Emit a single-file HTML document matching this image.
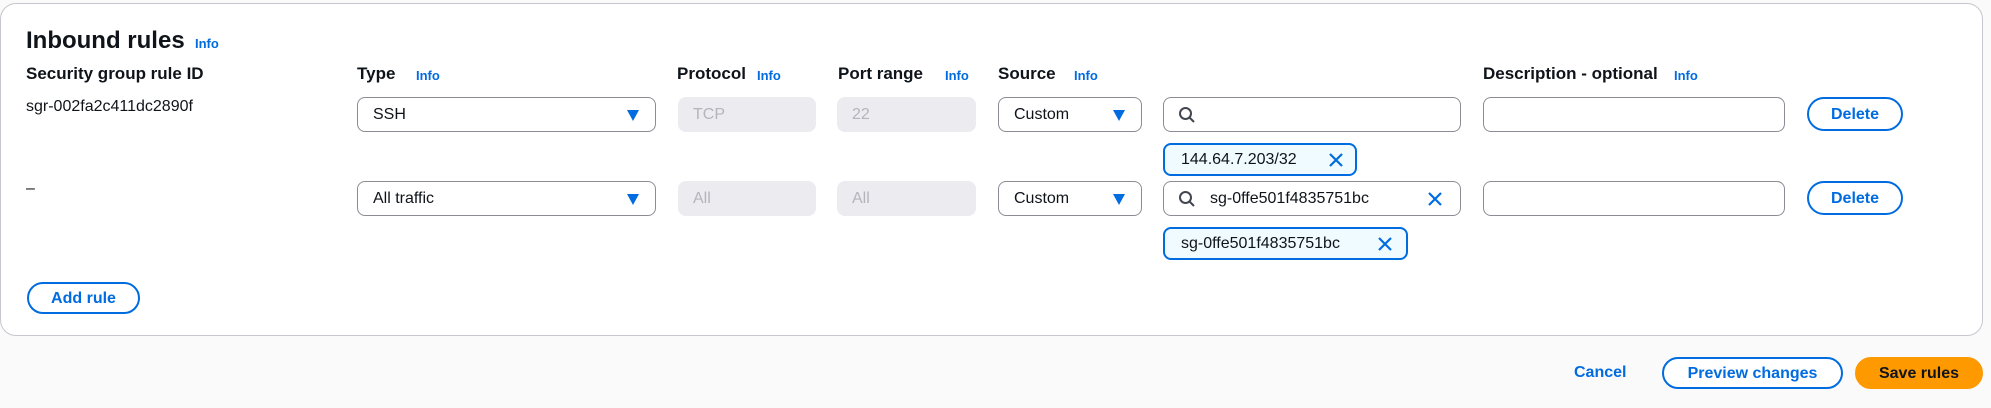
<!DOCTYPE html>
<html><head><style>
*{box-sizing:border-box;margin:0;padding:0}
body{width:1991px;height:408px;background:#fafafa;font-family:"Liberation Sans",Arial,sans-serif;color:#0f141a;position:relative;overflow:hidden;font-size:16px}
.card{position:absolute;left:0;top:3px;width:1983px;height:333px;background:#fff;border:1px solid #c6c6cd;border-radius:16px}
.a{position:absolute;white-space:nowrap}
.h{font-weight:bold;font-size:17px;top:64px}
.info{color:#006ce0;font-weight:bold;font-size:13px;position:absolute;white-space:nowrap}
.inp{position:absolute;height:35px;border:1px solid #8c8c94;border-radius:8px;background:#fff;padding-left:15px;line-height:34px;font-size:16px}
.dis{position:absolute;height:35px;border-radius:8px;background:#ebebf0;color:#b4b4bb;padding-left:15px;line-height:35px}
.arr{position:absolute;right:16px;top:12px;width:0;height:0;border-left:6px solid transparent;border-right:6px solid transparent;border-top:11px solid #006ce0}
.btn{position:absolute;border:2px solid #006ce0;border-radius:20px;color:#006ce0;font-weight:bold;text-align:center;background:#fff}
.tok{position:absolute;height:33px;border:2px solid #006ce0;border-radius:8px;background:#f0fbff;padding-left:16px;line-height:29px}
.x{position:absolute;top:50%;width:18px;height:18px;margin-top:-9px}
</style></head><body>
<div class="card"></div>
<div class="a" style="left:26px;top:27px;font-size:24px;font-weight:bold">Inbound rules</div>
<div class="info" style="left:195px;top:36px">Info</div>

<div class="a h" style="left:26px">Security group rule ID</div>
<div class="a h" style="left:357px">Type</div><div class="info" style="left:416px;top:68px">Info</div>
<div class="a h" style="left:677px">Protocol</div><div class="info" style="left:757px;top:68px">Info</div>
<div class="a h" style="left:838px">Port range</div><div class="info" style="left:945px;top:68px">Info</div>
<div class="a h" style="left:998px">Source</div><div class="info" style="left:1074px;top:68px">Info</div>
<div class="a h" style="left:1483px">Description - optional</div><div class="info" style="left:1674px;top:68px">Info</div>

<div class="a" style="left:26px;top:98px">sgr-002fa2c411dc2890f</div>
<div class="inp" style="left:357px;top:97px;width:299px">SSH<span class="arr"></span></div>
<div class="dis" style="left:678px;top:97px;width:138px">TCP</div>
<div class="dis" style="left:837px;top:97px;width:139px">22</div>
<div class="inp" style="left:998px;top:97px;width:144px">Custom<span class="arr"></span></div>
<div class="inp" style="left:1163px;top:97px;width:298px"><svg style="position:absolute;left:14px;top:8px" width="18" height="18" viewBox="0 0 18 18"><circle cx="7.5" cy="7.5" r="5.5" fill="none" stroke="#424650" stroke-width="2"/><path d="M11.5 11.5L16 16" stroke="#424650" stroke-width="2"/></svg></div>
<div class="inp" style="left:1483px;top:97px;width:302px"></div>
<div class="btn" style="left:1807px;top:97px;width:96px;height:34px;line-height:31px">Delete</div>
<div class="tok" style="left:1163px;top:143px;width:194px">144.64.7.203/32<svg class="x" style="right:10px" viewBox="0 0 18 18"><path d="M3 3L15 15M15 3L3 15" stroke="#006ce0" stroke-width="2.2"/></svg></div>

<div class="a" style="left:26px;top:180px">–</div>
<div class="inp" style="left:357px;top:181px;width:299px">All traffic<span class="arr"></span></div>
<div class="dis" style="left:678px;top:181px;width:138px">All</div>
<div class="dis" style="left:837px;top:181px;width:139px">All</div>
<div class="inp" style="left:998px;top:181px;width:144px">Custom<span class="arr"></span></div>
<div class="inp" style="left:1163px;top:181px;width:298px;padding-left:46px"><svg style="position:absolute;left:14px;top:8px" width="18" height="18" viewBox="0 0 18 18"><circle cx="7.5" cy="7.5" r="5.5" fill="none" stroke="#424650" stroke-width="2"/><path d="M11.5 11.5L16 16" stroke="#424650" stroke-width="2"/></svg>sg-0ffe501f4835751bc<svg class="x" style="right:16px" viewBox="0 0 18 18"><path d="M3 3L15 15M15 3L3 15" stroke="#006ce0" stroke-width="2.2"/></svg></div>
<div class="inp" style="left:1483px;top:181px;width:302px"></div>
<div class="btn" style="left:1807px;top:181px;width:96px;height:34px;line-height:31px">Delete</div>
<div class="tok" style="left:1163px;top:227px;width:245px">sg-0ffe501f4835751bc<svg class="x" style="right:12px" viewBox="0 0 18 18"><path d="M3 3L15 15M15 3L3 15" stroke="#006ce0" stroke-width="2.2"/></svg></div>

<div class="btn" style="left:27px;top:282px;width:113px;height:32px;line-height:29px">Add rule</div>

<div class="a" style="left:1574px;top:364px;color:#006ce0;font-weight:bold">Cancel</div>
<div class="btn" style="left:1662px;top:357px;width:181px;height:32px;line-height:29px">Preview changes</div>
<div class="btn" style="left:1855px;top:357px;width:128px;height:32px;line-height:29px;background:#ff9900;border-color:#ff9900;color:#0f141a">Save rules</div>
</body></html>
